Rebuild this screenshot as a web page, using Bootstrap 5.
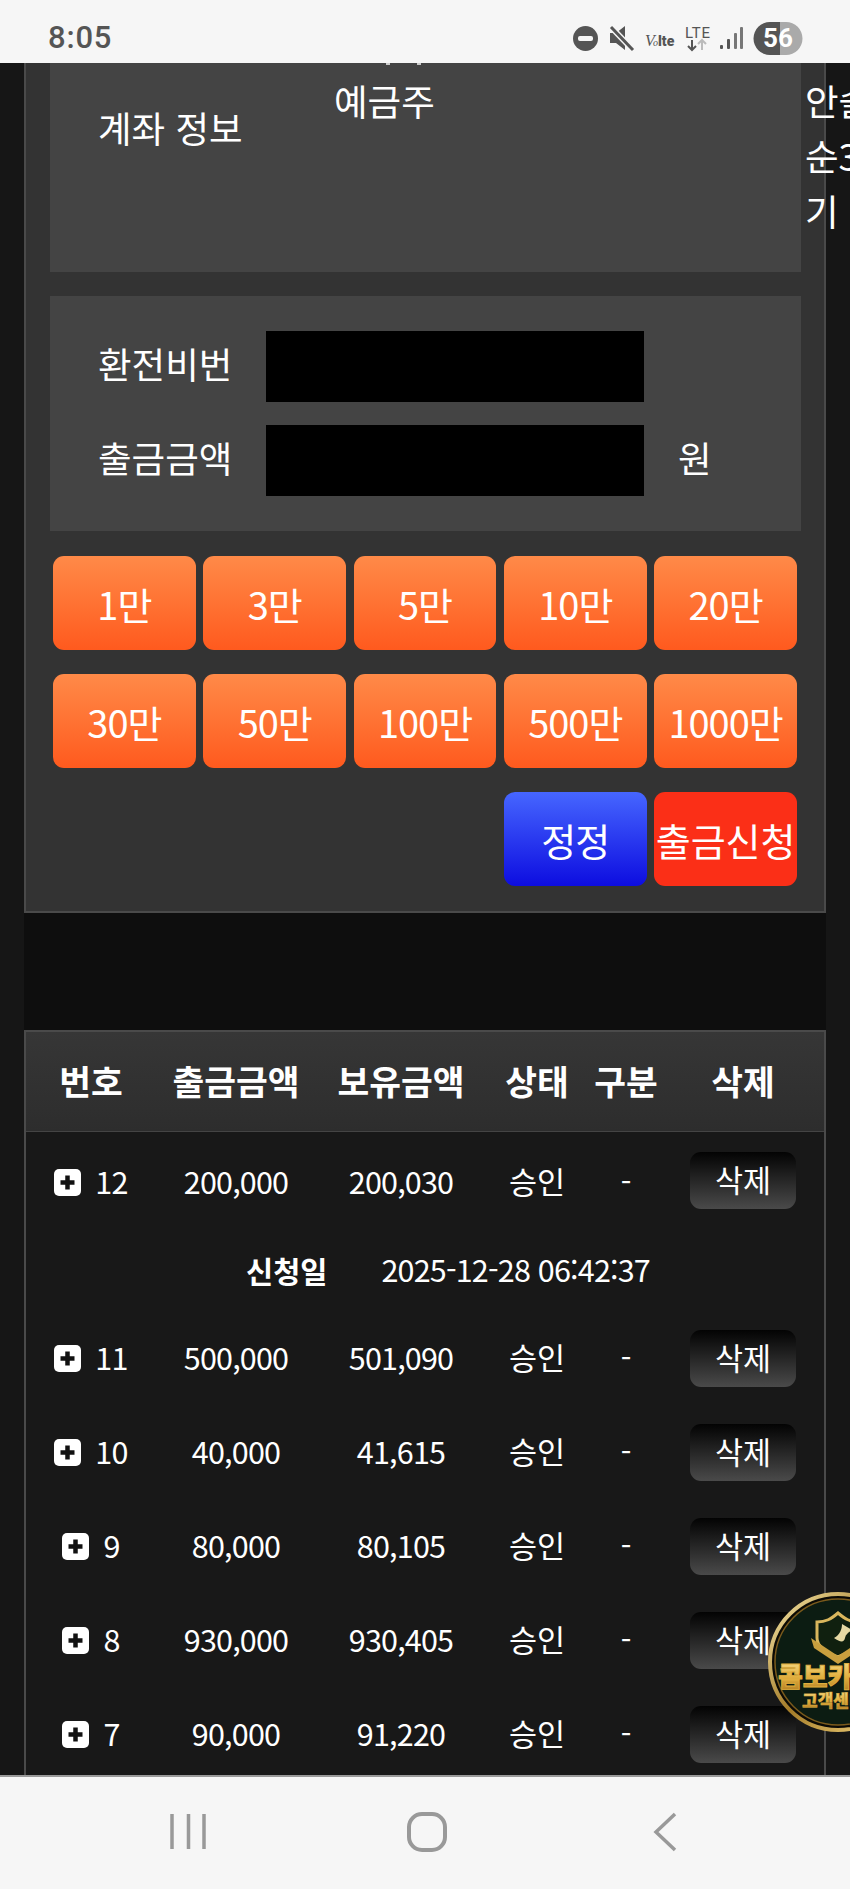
<!DOCTYPE html>
<html lang="ko">

<head>
  <meta charset="utf-8">
  <meta name="viewport" content="width=device-width">
  <title>출금신청</title>
  <link href="https://cdn.jsdelivr.net/npm/bootstrap@5.3.3/dist/css/bootstrap.min.css" rel="stylesheet" />
  <style>
    html, body { margin: 0; height: 1889px; overflow: hidden; }
    body { background: #161616; color: #fff; font-family: "Noto Sans CJK KR", "Liberation Sans", sans-serif; position: relative; }

    .status-strip { height: 63px; background: #f6f6f6; color: #555; padding: 0 47px 0 48px; }
    .status-time { font-family: Roboto, sans-serif; font-weight: 500; font-size: 31px; letter-spacing: .8px; margin-top: 13px; }

    .page-view { height: 1712px; overflow: hidden; position: relative; }
    .page-col { margin-left: 24px; width: 802px; height: 100%; background: #0e0e0e; }

    .wd-panel { background: #333; border: solid #4a4a4a; border-width: 0 2px 2px 2px; padding: 0 23px 25px 24px; height: 850px; }
    .acct-box { height: 209px; background: #444; font-size: 36.500px; }
    .acct-label { width: 284px; padding-left: 48px; margin-top: 39px; line-height: 52px; }
    .acct-owner { margin-top: 11px; line-height: 54px; }
    .side-note { position: absolute; left: 805px; top: 10px; font-size: 36.500px; line-height: 55px; white-space: nowrap; }
    .hidden-tick { position: absolute; top: 0; width: 4px; height: 2px; background: #ccc; }
    .tick-a { left: 336px; }
    .tick-b { left: 367px; }

    .pw-box { margin-top: 24px; height: 235px; background: #444; padding: 35px 0 0 48px; font-size: 36.500px; }
    .pw-row { height: 71px; margin-bottom: 23px; }
    .pw-label { width: 168px; margin-top: -5px; }
    .pw-input { width: 378px; height: 71px; background: #000; border: 0; border-radius: 0; }
    .pw-input:focus { background: #000; box-shadow: none; color: #fff; }
    .pw-unit { margin-left: 34px; margin-top: -5px; }

    .amount-grid { display: grid; grid-template-columns: repeat(5, 1fr); gap: 24px 7.5px; margin: 25px 4px 0 3px; }
    .amt-btn { height: 94px; padding: 0; border: 0; border-radius: 11px; color: #fff; font-size: 38px; letter-spacing: -1px; white-space: nowrap; background: linear-gradient(#ff8a48, #ff5a1e); }
    .amt-btn:hover, .amt-btn:active { color: #fff; background: linear-gradient(#ff8a48, #ff5a1e); }
    .fix-btn { background: linear-gradient(#4666ff, #0d0de0); }
    .apply-btn { background: #fb2f17; letter-spacing: 0; }

    .list-panel { margin-top: 117px; background: #181818; border: solid #4a4a4a; border-width: 2px 2px 0 2px; height: 800px; }
    .wd-table { --bs-table-bg: transparent; --bs-table-color: #fff; margin: 0; table-layout: fixed; width: 798px; font-size: 30.500px; }
    .wd-table > :not(caption) > * > * { border: 0; padding: 0; text-align: center; vertical-align: middle; box-shadow: none; color: #fff; }
    .wd-table thead th { height: 99px; font-size: 34.500px; font-weight: 700; background: linear-gradient(#363636, #2d2d2d); border-bottom: 1px solid #444; }
    .wd-table > * > tr > :last-child { padding-right: 2px; }
    .wd-table tbody tr { height: 94px; }
    .wd-table tbody tr:first-child { height: 98px; }
    .wd-table > tbody > tr:first-child > td { padding-top: 4px; }
    .wd-table > tbody > tr:first-child > td:last-child { padding-top: 0; }
    .wd-table tbody tr.detail-row { height: 82px; }
    .plus-cell { gap: 14px; }
    .plus-box { width: 27px; height: 27px; flex: none; }
    .del-btn { width: 106px; height: 57px; padding: 0; border: 0; border-radius: 11px; color: #fff; font-size: 30.500px; background: linear-gradient(#030303, #4a4a4a); }
    .del-btn:hover, .del-btn:active { color: #fff; background: linear-gradient(#030303, #4a4a4a); }
    .wd-table .detail-line { padding-left: 220px; gap: 54px; }
    .detail-title { font-weight: 700; font-size: 29.500px; }
    .num-tight { letter-spacing: -.8px; }

    .chat-bubble { position: absolute; left: 768px; top: 1592px; width: 140px; height: 140px; }
    .chat-bubble text { font-family: "Noto Sans CJK KR", sans-serif; font-weight: 900; }

    .nav-strip { height: 114px; background: #f6f6f6; border-top: 2px solid #999; }
  </style>
</head>

<body>

  <div class="status-strip d-flex justify-content-between align-items-center">
    <div class="status-time">8:05</div>
    <svg width="231" height="63" viewBox="572 0 231 63">
      <circle cx="585.500" cy="38.500" r="12.500" fill="#555" />
      <rect x="578" y="36" width="15" height="5" rx="2" fill="#f6f6f6" />
      <path d="M610 33h6l9-7v24l-9-7h-6z" fill="#555" />
      <path d="M611 27l22 23" stroke="#f6f6f6" stroke-width="6" />
      <path d="M611 27l22 23" stroke="#555" stroke-width="3" />
      <text x="645" y="46" font-family="Liberation Serif, serif" font-style="italic" font-size="16" fill="#555">V</text>
      <text x="653" y="46" font-family="Liberation Serif, serif" font-style="italic" font-size="10" fill="#555">o</text>
      <text x="658" y="46" font-family="Roboto, sans-serif" font-weight="900" font-size="14" fill="#555">lte</text>
      <text x="685" y="38" font-family="Roboto, sans-serif" font-size="15" fill="#555" textLength="25">LTE</text>
      <path d="M692 40v10M688 46l4 4 4-4" stroke="#555" stroke-width="2" fill="none" />
      <path d="M702 50v-10M698 44l4-4 4 4" stroke="#bbb" stroke-width="2" fill="none" />
      <rect x="720" y="45" width="3" height="4" rx="1" fill="#555" />
      <rect x="727" y="39" width="3" height="10" rx="1" fill="#555" />
      <rect x="734" y="33" width="3" height="16" rx="1" fill="#777" />
      <rect x="740" y="27" width="3" height="22" rx="1" fill="#777" />
      <path d="M780 22h-10a16.500 16.500 0 0 0 0 33h10z" fill="#555" />
      <path d="M780 22h6a16.500 16.500 0 0 1 0 33h-6z" fill="#aaa" />
      <text x="778" y="47" text-anchor="middle" font-family="Roboto, sans-serif" font-weight="700" font-size="26" fill="#fff">56</text>
    </svg>
  </div>

  <div class="page-view">
    <div class="page-col">
      <div class="wd-panel">
        <div class="acct-box d-flex position-relative">
          <span class="hidden-tick tick-a"></span>
          <span class="hidden-tick tick-b"></span>
          <div class="acct-label">계좌 정보</div>
          <div class="acct-owner">예금주</div>
        </div>

        <div class="pw-box">
          <div class="pw-row d-flex align-items-center">
            <label class="pw-label" for="wdPass">환전비번</label>
            <input class="form-control pw-input" id="wdPass" type="password">
          </div>
          <div class="pw-row d-flex align-items-center">
            <label class="pw-label" for="wdAmount">출금금액</label>
            <input class="form-control pw-input" id="wdAmount">
            <span class="pw-unit">원</span>
          </div>
        </div>

        <div class="amount-grid">
          <button class="btn amt-btn">1만</button>
          <button class="btn amt-btn">3만</button>
          <button class="btn amt-btn">5만</button>
          <button class="btn amt-btn">10만</button>
          <button class="btn amt-btn">20만</button>
          <button class="btn amt-btn">30만</button>
          <button class="btn amt-btn">50만</button>
          <button class="btn amt-btn">100만</button>
          <button class="btn amt-btn">500만</button>
          <button class="btn amt-btn">1000만</button>
          <div></div>
          <div></div>
          <div></div>
          <button class="btn amt-btn fix-btn">정정</button>
          <button class="btn amt-btn apply-btn">출금신청</button>
        </div>
      </div>

      <div class="list-panel">
        <table class="table wd-table">
          <colgroup>
            <col style="width:130px">
            <col style="width:160px">
            <col style="width:170px">
            <col style="width:102px">
            <col style="width:76px">
            <col style="width:160px">
          </colgroup>
          <thead>
            <tr>
              <th>번호</th>
              <th>출금금액</th>
              <th>보유금액</th>
              <th>상태</th>
              <th>구분</th>
              <th>삭제</th>
            </tr>
          </thead>
          <tbody id="wdRows"></tbody>
        </table>
      </div>
    </div>

    <div class="side-note">안솔<br>순3<br>기</div>
  </div>

  <svg class="chat-bubble" viewBox="0 0 140 140">
    <defs>
      <linearGradient id="goldText" x1="0" y1="0" x2="0" y2="1">
        <stop offset="0" stop-color="#fbe79a" />
        <stop offset="0.55" stop-color="#e0ae3e" />
        <stop offset="1" stop-color="#a8741e" />
      </linearGradient>
      <linearGradient id="goldRing" x1="0" y1="0" x2="1" y2="1">
        <stop offset="0" stop-color="#f6e6a8" />
        <stop offset="0.5" stop-color="#a47c28" />
        <stop offset="1" stop-color="#ffe08a" />
      </linearGradient>
    </defs>
    <circle cx="70" cy="70" r="68" fill="#0b0a05" stroke="url(#goldRing)" stroke-width="4" />
    <circle cx="70" cy="70" r="63" fill="#0c1c12" stroke="#7a5a1c" stroke-width="1.500" />
    <path d="M49 30c9 0 14-3 21-9 7 6 12 9 21 9v16c0 8-8 14-21 19-13-5-21-11-21-19z" fill="#10200f" stroke="#d9b65c" stroke-width="3" />
    <path d="M43 46l27 18 27-18-3 10-24 16-24-16z" fill="#c99f3e" />
    <path d="M66 46c6-3 8-9 8-14l10 6c-2 2-6 3-7 8s-5 4-11 0z" fill="#e6d9a4" />
    <text x="10" y="95" font-size="27" fill="url(#goldText)" stroke="#e0ae3e" stroke-width=".9">콤보카지노</text>
    <text x="34" y="115" font-size="17" fill="url(#goldText)" stroke="#e0ae3e" stroke-width=".4">고객센터</text>
  </svg>

  <div class="nav-strip d-flex">
    <svg width="850" height="112" viewBox="0 0 850 112" fill="none" stroke="#999">
      <path d="M172 37v35M188.500 37v35M204 37v35" stroke-width="3.500" />
      <rect x="409" y="37" width="36" height="36" rx="13" stroke-width="4" />
      <path d="M675 37l-19 18 19 18" stroke-width="3.500" />
    </svg>
  </div>

  <script>
    const wdRows = document.querySelector("#wdRows");

    const withdrawals = [
      { no: 12, amount: "200,000", balance: "200,030", date: "2025-12-28 06:42:37" },
      { no: 11, amount: "500,000", balance: "501,090" },
      { no: 10, amount: "40,000", balance: "41,615" },
      { no: 9, amount: "80,000", balance: "80,105" },
      { no: 8, amount: "930,000", balance: "930,405" },
      { no: 7, amount: "90,000", balance: "91,220" }
    ];

    const plusIcon = `<svg class="plus-box" viewBox="0 0 27 27"><rect width="27" height="27" rx="5" fill="#fff"/><path d="M13.500 6.500v14M6.500 13.500h14" stroke="#111" stroke-width="4.500"/></svg>`;

    for (let i = 0; i < withdrawals.length; i++) {
      const item = withdrawals[i];
      const row = document.createElement("tr");
      row.innerHTML = `
        <td><div class="d-flex justify-content-center align-items-center plus-cell">${plusIcon}<span class="num-tight">${item.no}</span></div></td>
        <td class="num-tight">${item.amount}</td>
        <td class="num-tight">${item.balance}</td>
        <td>승인</td>
        <td>-</td>
        <td><button class="btn del-btn">삭제</button></td>`;
      wdRows.appendChild(row);

      if (item.date) {
        const detail = document.createElement("tr");
        detail.className = "detail-row";
        detail.innerHTML = `<td colspan="6"><div class="d-flex align-items-center detail-line"><span class="detail-title">신청일</span><span class="num-tight">${item.date}</span></div></td>`;
        wdRows.appendChild(detail);
      }
    }
  </script>
  <script src="https://cdn.jsdelivr.net/npm/bootstrap@5.3.3/dist/js/bootstrap.bundle.min.js"></script>
</body>

</html>
